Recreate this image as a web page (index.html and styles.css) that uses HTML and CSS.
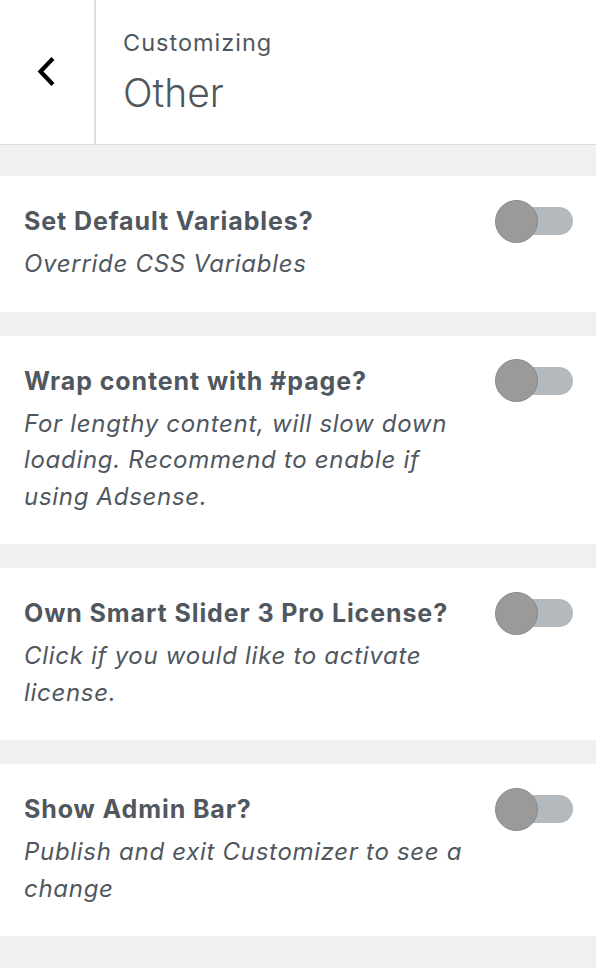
FILE: index.html
```html
<!DOCTYPE html>
<html>
<head>
<meta charset="utf-8">
<link rel="stylesheet" href="styles.css">
</head>
<body>
<div class="panel">
  <header class="head">
    <button class="back" aria-label="Back">
      <svg width="20" height="30" viewBox="0 0 20 30"><path d="M15.5 3 L4.5 14.5 L15.5 26" fill="none" stroke="#000" stroke-width="4.2" stroke-linecap="square"/></svg>
    </button>
    <div class="titles">
      <div class="sub">Customizing</div>
      <div class="title">Other</div>
    </div>
  </header>
  <div class="list">
    <section class="card">
      <div class="text">
        <div class="label">Set Default Variables?</div>
        <div class="desc">Override CSS Variables</div>
      </div>
      <span class="toggle"><span class="thumb"></span></span>
    </section>
    <section class="card">
      <div class="text">
        <div class="label">Wrap content with #page?</div>
        <div class="desc">For lengthy content, will slow down loading. Recommend to enable if using Adsense.</div>
      </div>
      <span class="toggle"><span class="thumb"></span></span>
    </section>
    <section class="card">
      <div class="text">
        <div class="label">Own Smart Slider 3 Pro License?</div>
        <div class="desc">Click if you would like to activate license.</div>
      </div>
      <span class="toggle"><span class="thumb"></span></span>
    </section>
    <section class="card">
      <div class="text">
        <div class="label">Show Admin Bar?</div>
        <div class="desc">Publish and exit Customizer to see a change</div>
      </div>
      <span class="toggle"><span class="thumb"></span></span>
    </section>
  </div>
</div>
</body>
</html>
```
FILE: styles.css
```css
html, body {
  margin: 0;
  padding: 0;
  background: #f0f0f1;
  font-family: Inter, "Noto Sans", sans-serif;
  color: #50575e;
}
.panel {
  width: 596px;
  min-height: 968px;
  background: #f0f0f1;
}
.head {
  display: flex;
  height: 144px;
  background: #fff;
  border-bottom: 1px solid #dcdcde;
}
.back {
  width: 96px;
  flex: none;
  border: 0;
  border-right: 2px solid #dcdcde;
  background: #fff;
  padding: 0;
  display: flex;
  align-items: center;
  justify-content: center;
  margin: 0;
}
.back svg { display: block; margin-right: 2px; }
.titles {
  padding: 26px 0 0 27px;
}
.sub {
  font-size: 23.5px;
  line-height: 34px;
  font-weight: 400;
  letter-spacing: 1px;
}
.title {
  font-size: 39px;
  line-height: 40px;
  font-weight: 300;
  margin-top: 13px;
}
.list {
  display: flex;
  flex-direction: column;
  gap: 24px;
  padding: 31px 0 33px;
}
.card {
  background: #fff;
  display: flex;
  align-items: flex-start;
  justify-content: space-between;
  padding: 27px 23px 29px 24px;
}
.text { max-width: 450px; }
.label {
  font-size: 25px;
  line-height: 36px;
  font-weight: 700;
  letter-spacing: 0.9px;
  color: #50575e;
  white-space: nowrap;
}
.desc {
  margin-top: 7px;
  font-size: 24px;
  line-height: 36.5px;
  font-style: italic;
  letter-spacing: 0.7px;
  color: #50575e;
}
.toggle {
  position: relative;
  flex: none;
  width: 78px;
  height: 28px;
  margin-top: 4px;
  margin-left: 8px;
  display: flex;
  align-items: center;
}
.toggle::before {
  content: "";
  position: absolute;
  left: 10px;
  right: 0;
  top: 0;
  height: 28px;
  border-radius: 14px;
  background: #b4b9be;
}
.thumb {
  position: relative;
  width: 41px;
  height: 41px;
  border-radius: 50%;
  background: #9a9a9a;
  border: 1px solid #888;
}
```
